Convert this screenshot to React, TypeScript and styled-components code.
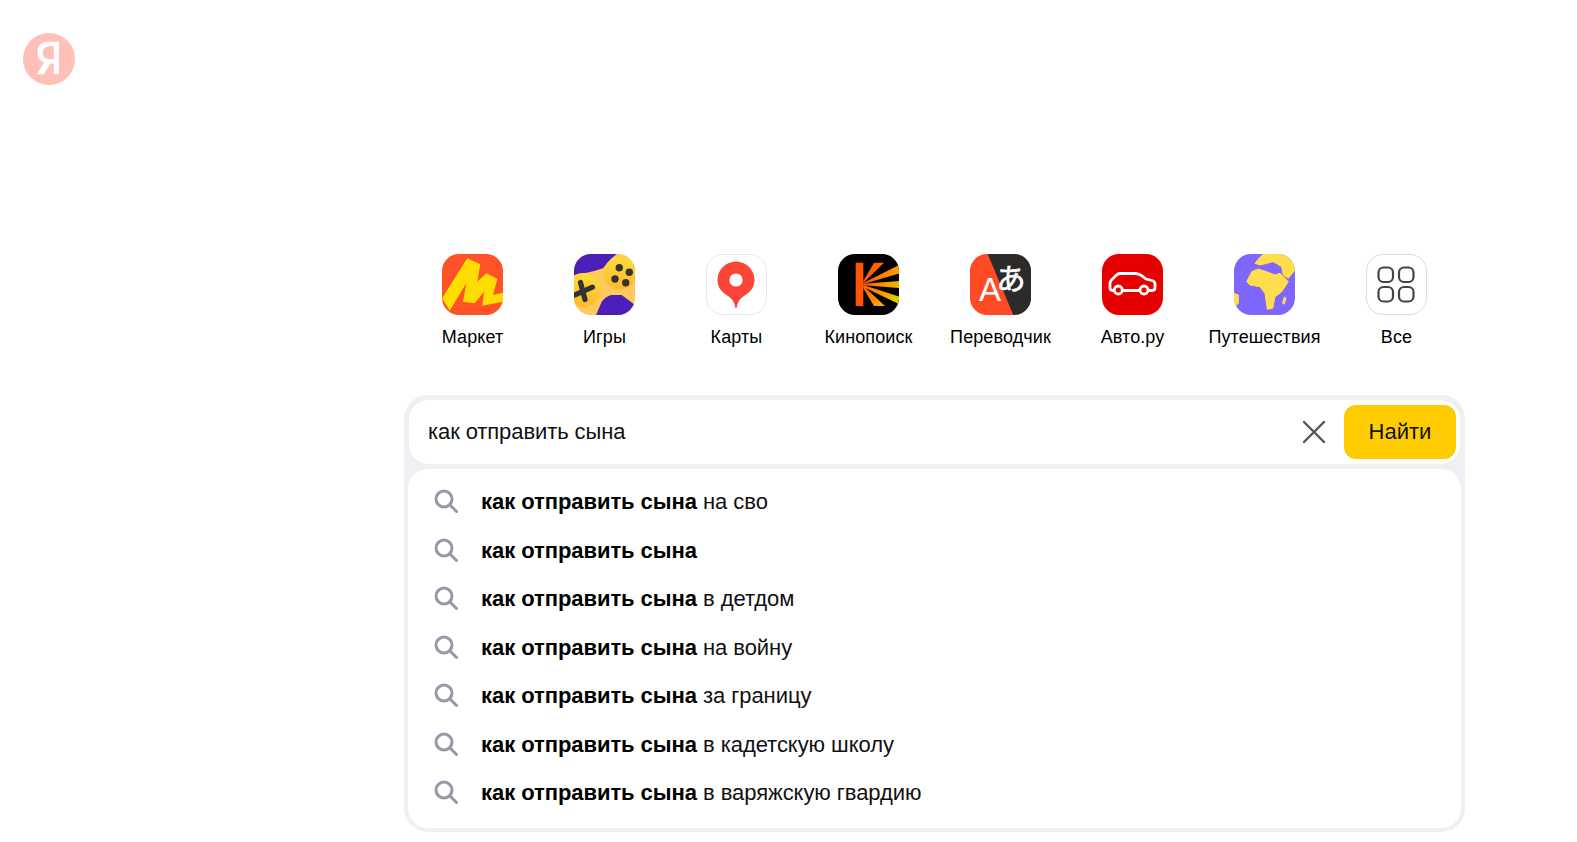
import React from "react";
import styled, { createGlobalStyle } from "styled-components";

const Global = createGlobalStyle`
  html, body { margin: 0; padding: 0; background: #fff; }
  body { font-family: "Liberation Sans", Arial, sans-serif; color: #000; }
`;

const Page = styled.div`
  width: 1577px;
  height: 842px;
  overflow: hidden;
`;

const Header = styled.header`
  height: 254px;
  padding: 33px 0 0 23px;
  box-sizing: border-box;
`;

const LogoMark = styled.svg`
  display: block;
  width: 52px;
  height: 52px;
`;

const Main = styled.main`
  width: 1061px;
  margin-left: 404px;
`;

const Services = styled.nav`
  display: grid;
  grid-template-columns: repeat(8, 132px);
  padding-left: 2.5px;
  height: 141px;
`;

const Service = styled.a`
  display: flex;
  flex-direction: column;
  align-items: center;
  color: #000;
  font-size: 18px;
  line-height: 22px;
  letter-spacing: 0.1px;
  white-space: nowrap;
`;

const IconFrame = styled.svg`
  display: block;
  width: 61px;
  height: 61px;
  margin-bottom: 11px;
`;

const SearchFrame = styled.section`
  box-sizing: border-box;
  height: 437px;
  padding: 5px 4px 4px;
  background: #eff0f4;
  border-radius: 24px;
  display: flex;
  flex-direction: column;
  gap: 5px;
`;

const InputBar = styled.div`
  height: 64px;
  margin: 0 1px 0 1px;
  background: #fff;
  border-radius: 20px;
  display: flex;
  align-items: center;
  padding: 0 4px 0 19px;
`;

const Query = styled.span`
  flex: 1;
  font-size: 22px;
  line-height: 26px;
  letter-spacing: -0.1px;
  color: #111;
`;

const Clear = styled.svg`
  width: 24px;
  height: 24px;
  margin-right: 18px;
  display: block;
`;

const FindButton = styled.button`
  width: 112px;
  height: 54px;
  border: 0;
  border-radius: 12px;
  background: #ffcc00;
  color: #111;
  font: 22px/26px "Liberation Sans", Arial, sans-serif;
  padding: 0;
`;

const Suggest = styled.ul`
  list-style: none;
  flex: 1;
  margin: 0;
  padding: 9px 0 0;
  background: #fff;
  border-radius: 20px;
`;

const Row = styled.li`
  height: 48.5px;
  display: flex;
  align-items: center;
  padding-left: 26px;
  font-size: 22px;
  letter-spacing: -0.06px;
  color: #111;
  white-space: pre;
`;

const Glass = styled.svg`
  width: 24px;
  height: 24px;
  display: block;
  margin: -2px 23px 0 0;
  flex: none;
`;

const Strong = styled.b`
  font-weight: 700;
  color: #000;
`;

const Clip = ({ id }: { id: string }) => (
  <clipPath id={id}>
    <rect width="61" height="61" rx="17" />
  </clipPath>
);

const Market = () => (
  <IconFrame viewBox="0 0 61 61">
    <Clip id="c1" />
    <g clipPath="url(#c1)">
      <rect width="61" height="61" fill="#ff5226" />
      <path
        d="M25.3 4.3 38.3 10.3 35.3 27.7 44.3 19.3 55.3 25 51 41 61 38.7V47.7L40.3 51.7 42 37.7 32.7 49.3 21 47.7 24.3 29.3 7.7 56.7 0 44.3Z"
        fill="#ffdd00"
      />
    </g>
  </IconFrame>
);

const Games = () => (
  <IconFrame viewBox="0 0 61 61">
    <defs>
      <linearGradient id="g2" x1="0" y1="0" x2="0" y2="1">
        <stop offset="0" stopColor="#ffdc3a" />
        <stop offset="1" stopColor="#fdb92e" />
      </linearGradient>
    </defs>
    <Clip id="c2" />
    <g clipPath="url(#c2)">
      <rect width="61" height="61" fill="#ffc95c" />
      <path d="M0 0H42.7L37.7 4.3Q33 9 29 14.3 20 17.5 12.7 18.7 6 20.5 0 21Z" fill="#4b1fb8" />
      <path d="M22 61 27.7 47.7Q32 42 37.7 41H47.7L61 51V61Z" fill="#4b1fb8" />
      <circle cx="9.3" cy="36" r="17" fill="url(#g2)" />
      <circle cx="46" cy="19.3" r="16.5" fill="url(#g2)" />
      <g stroke="#333" strokeWidth="5.2" strokeLinecap="round">
        <path d="M1 41 18.5 33.2" />
        <path d="M6.5 28.5 11 45.5" />
      </g>
      <g fill="#333">
        <circle cx="45.3" cy="13.7" r="3.7" />
        <circle cx="55.3" cy="18.3" r="3.7" />
        <circle cx="41" cy="25" r="3.7" />
        <circle cx="51.7" cy="28.7" r="3.7" />
      </g>
    </g>
  </IconFrame>
);

const Maps = () => (
  <IconFrame viewBox="0 0 61 61">
    <rect x=".5" y=".5" width="60" height="60" rx="16.5" fill="#fff" stroke="#e8e8e8" />
    <path
      d="M30 7.5C19.8 7.5 11.5 15.8 11.5 26 11.5 34.5 17 38.5 22 42 25.5 44.5 28.3 47.5 29 52.5 29.1 53.4 29.5 54 30 54 30.5 54 30.9 53.4 31 52.5 31.7 47.5 34.5 44.5 38 42 43 38.5 48.5 34.5 48.5 26 48.5 15.8 40.2 7.5 30 7.5Z"
      fill="#fc4437"
    />
    <circle cx="30" cy="26" r="6.6" fill="#fff" />
  </IconFrame>
);

const Kino = () => (
  <IconFrame viewBox="0 0 61 61">
    <defs>
      <linearGradient id="g4" gradientUnits="userSpaceOnUse" x1="24" y1="26" x2="62" y2="50">
        <stop offset="0" stopColor="#ff5500" />
        <stop offset=".55" stopColor="#ff9a00" />
        <stop offset="1" stopColor="#c8e600" />
      </linearGradient>
    </defs>
    <Clip id="c4" />
    <g clipPath="url(#c4)">
      <rect width="61" height="61" fill="#000" />
      <rect x="17.7" y="8.7" width="7.6" height="43.4" fill="#ff5500" />
      <g fill="url(#g4)">
        <path d="M25.3 27 36 8.7H46L25.3 29Z" />
        <path d="M25.3 29 61 11V19.5L25.3 30Z" />
        <path d="M25.3 29.7 61 27V34L25.3 31.3Z" />
        <path d="M25.3 31 61 42.5V50L25.3 33Z" />
        <path d="M25.3 32 47 52.1H36L25.3 34Z" />
      </g>
    </g>
  </IconFrame>
);

const GlyphA = styled.text`
  font: 33px "Liberation Sans", Arial, sans-serif;
  fill: #fff;
`;

const GlyphKana = styled.text`
  font: 400 29px "Noto Sans CJK JP", sans-serif;
  fill: #fff;
  stroke: #fff;
  stroke-width: 0.7px;
`;

const Translate = () => (
  <IconFrame viewBox="0 0 61 61">
    <Clip id="c5" />
    <g clipPath="url(#c5)">
      <rect width="61" height="61" fill="#ff4a26" />
      <path d="M17.7 0H61V61H43.3Z" fill="#2b2b2b" />
      <GlyphKana x="41" y="36" textAnchor="middle">あ</GlyphKana>
      <GlyphA x="20" y="47" textAnchor="middle">A</GlyphA>
    </g>
  </IconFrame>
);

const Auto = () => (
  <IconFrame viewBox="0 0 61 61">
    <rect width="61" height="61" rx="17" fill="#e60000" />
    <g fill="none" stroke="#fff" strokeWidth="2.8" strokeLinecap="round" strokeLinejoin="round">
      <path d="M11.5 36.5H10.5Q8 36.5 8 33.5V29.5Q8 27.5 9.5 26L14 21.5Q16 19.5 18 19.5H33Q37 19.5 40 21.8L44 25 50 26.5Q53 27.3 53 30V33.5Q53 36.5 50.5 36.5H47" />
      <path d="M21 36.5H37" />
      <circle cx="16.3" cy="36" r="4" />
      <circle cx="42" cy="36" r="4" />
    </g>
  </IconFrame>
);

const Travel = () => (
  <IconFrame viewBox="0 0 61 61">
    <Clip id="c7" />
    <g clipPath="url(#c7)">
      <rect width="61" height="61" fill="#7f66ff" />
      <g fill="#ffdd4d" stroke="#ffdd4d" strokeWidth="1" strokeLinejoin="round">
        <path d="M12.7 27.7 17.7 17.7 24.3 15 32.7 17.7 41 21 46 19.3 51 24.3 54.3 27.7 47.7 37.7 41 42.7 38.7 54.3 33.3 55.3 31 39.3 26 32.7 16 31Z" />
        <path d="M21 9.3 26 3.3 29.3 0H61V16L54.3 24.3 49.3 21 47.7 12.7 39.3 7.7 26 11Z" />
        <path d="M0 39.3 4.3 41V49.3L0 54Z" />
      </g>
      <ellipse cx="50.3" cy="46.7" rx="1.6" ry="4" transform="rotate(15 50.3 46.7)" fill="#ffdd4d" />
    </g>
  </IconFrame>
);

const All = () => (
  <IconFrame viewBox="0 0 61 61">
    <rect x=".5" y=".5" width="60" height="60" rx="16.5" fill="#fff" stroke="#dcdcdc" />
    <g fill="none" stroke="#444" strokeWidth="2.2">
      <rect x="12.5" y="13.5" width="14.5" height="14.5" rx="5" />
      <rect x="33" y="13.5" width="14.5" height="14.5" rx="5" />
      <rect x="12.5" y="33" width="14.5" height="14.5" rx="5" />
      <rect x="33" y="33" width="14.5" height="14.5" rx="5" />
    </g>
  </IconFrame>
);

const services: [string, React.FC][] = [
  ["Маркет", Market],
  ["Игры", Games],
  ["Карты", Maps],
  ["Кинопоиск", Kino],
  ["Переводчик", Translate],
  ["Авто.ру", Auto],
  ["Путешествия", Travel],
  ["Все", All],
];

const tails = [
  " на сво",
  "",
  " в детдом",
  " на войну",
  " за границу",
  " в кадетскую школу",
  " в варяжскую гвардию",
];

export default function App() {
  return (
    <Page>
      <Global />
      <Header>
        <LogoMark viewBox="0 0 52 52">
          <circle cx="26" cy="26" r="26" fill="#ffc0b8" />
          <path
            fillRule="evenodd"
            fill="#fff"
            d="M36 8.7V41.3H30.8V30.6H27.5L21 41.3H14L21 29.5Q14.5 27 14.5 19.5 14.5 8.7 26 8.7ZM30.8 13.2H26.5Q19.8 13.2 19.8 19.7 19.8 26.2 26.5 26.2H30.8Z"
          />
        </LogoMark>
      </Header>
      <Main>
        <Services>
          {services.map(([name, Icon]) => (
            <Service key={name}>
              <Icon />
              {name}
            </Service>
          ))}
        </Services>
        <SearchFrame>
          <InputBar>
            <Query>как отправить сына</Query>
            <Clear viewBox="0 0 24 24">
              <path d="M2 2 22 22M22 2 2 22" stroke="#555" strokeWidth="2.4" strokeLinecap="round" />
            </Clear>
            <FindButton>Найти</FindButton>
          </InputBar>
          <Suggest>
            {tails.map((tail, i) => (
              <Row key={i}>
                <Glass viewBox="0 0 24 24">
                  <circle cx="10" cy="10" r="8" fill="none" stroke="#9699a8" strokeWidth="3" />
                  <path d="M16 16 22.5 22.5" stroke="#9699a8" strokeWidth="3" strokeLinecap="round" />
                </Glass>
                <Strong>как отправить сына</Strong>
                {tail}
              </Row>
            ))}
          </Suggest>
        </SearchFrame>
      </Main>
    </Page>
  );
}
